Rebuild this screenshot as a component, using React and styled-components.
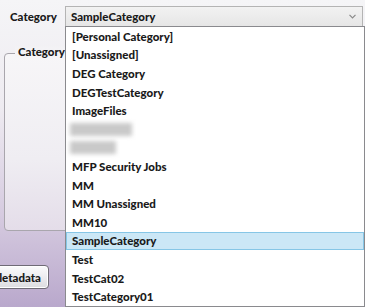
import styled, { createGlobalStyle } from "styled-components";

const Global = createGlobalStyle`
  html, body {
    margin: 0;
    padding: 0;
  }
  body {
    font-family: Lato, "Open Sans", sans-serif;
    overflow: hidden;
  }
`;

const Page = styled.div`
  position: relative;
  width: 365px;
  height: 307px;
  overflow: hidden;
  background: linear-gradient(180deg, #f5f5f7 0%, #eeebf1 35%, #d6cbe0 70%, #b9a8cc 100%);
`;

const Header = styled.div`
  display: flex;
  align-items: center;
  gap: 8px;
  padding: 6px 2px 0 10px;
  height: 20px;
`;

const Label = styled.span`
  font-size: 11.5px;
  font-weight: 900;
  color: #1a1a1a;
`;

const Combo = styled.div`
  flex: 1;
  height: 19px;
  display: flex;
  align-items: center;
  justify-content: space-between;
  padding: 0 6px 0 5px;
  border: 1px solid #b4b4b4;
  background: linear-gradient(180deg, #f2f2f2 0%, #e6e6e6 100%);
  font-size: 11.5px;
  font-weight: 900;
  color: #1a1a1a;
`;

const Chevron = styled.svg`
  width: 7px;
  height: 5px;
`;

const Body = styled.div`
  display: flex;
  flex-direction: column;
  padding-left: 4px;
`;

const GroupBox = styled.div`
  position: relative;
  margin-top: 27px;
  width: 200px;
  height: 176px;
  border: 1px solid #a9a6ad;
  border-radius: 4px;
  background: linear-gradient(180deg, #f7f6f8 0%, #efedf2 60%, #e4dde9 100%);
`;

const GroupTitle = styled.span`
  position: absolute;
  top: -9px;
  left: 10px;
  padding: 0 3px;
  font-size: 11.5px;
  font-weight: 900;
  color: #1a1a1a;
  background: linear-gradient(180deg, #f2f1f4 0%, #f6f5f8 100%);
`;

const Button = styled.div`
  margin-top: 34px;
  margin-left: -30px;
  width: 75px;
  height: 24px;
  display: flex;
  align-items: center;
  justify-content: flex-end;
  padding-right: 7px;
  box-sizing: border-box;
  border: 1px solid #6f6b76;
  border-radius: 4px;
  background: linear-gradient(180deg, #fbfbfc 0%, #ececef 50%, #dcdce0 100%);
  box-shadow: inset 0 0 0 1px #ffffff;
  font-size: 11.5px;
  font-weight: 900;
  color: #1a1a1a;
`;

const Popup = styled.div`
  position: absolute;
  top: 26px;
  left: 65px;
  width: 300px;
  height: 281px;
  box-sizing: border-box;
  border: 1px solid #8a8a8e;
  background: #ffffff;
  display: flex;
  flex-direction: column;
`;

const Item = styled.div`
  height: 18.6px;
  flex: none;
  display: flex;
  align-items: center;
  padding-left: 5px;
  box-sizing: border-box;
  font-size: 11.5px;
  font-weight: 900;
  color: #1a1a1a;
  background: ${(p) => (p.$selected ? "#cbe7f6" : "transparent")};
  border: 1px solid ${(p) => (p.$selected ? "#86c6e6" : "transparent")};
`;

const Blur = styled.div`
  width: ${(p) => p.$w}px;
  height: 13px;
  margin-left: -2px;
  background: #c9c9c9;
  filter: blur(2px);
`;

const items = [
  "[Personal Category]",
  "[Unassigned]",
  "DEG Category",
  "DEGTestCategory",
  "ImageFiles",
  { blur: 62 },
  { blur: 46 },
  "MFP Security Jobs",
  "MM",
  "MM Unassigned",
  "MM10",
  "SampleCategory",
  "Test",
  "TestCat02",
  "TestCategory01",
];

const App = () => {
  return (
    <Page>
      <Global />
      <Header>
        <Label>Category</Label>
        <Combo>
          <span>SampleCategory</span>
          <Chevron viewBox="0 0 7 5">
            <path d="M0.5 0.8 L3.5 3.8 L6.5 0.8" fill="none" stroke="#8a8a8a" strokeWidth="1.2" />
          </Chevron>
        </Combo>
      </Header>
      <Body>
        <GroupBox>
          <GroupTitle>Category</GroupTitle>
        </GroupBox>
        <Button>letadata</Button>
      </Body>
      <Popup>
        {items.map((it, i) =>
          typeof it === "string" ? (
            <Item key={i} $selected={it === "SampleCategory"}>
              {it}
            </Item>
          ) : (
            <Item key={i}>
              <Blur $w={it.blur} />
            </Item>
          )
        )}
      </Popup>
    </Page>
  );
};

export default App;
